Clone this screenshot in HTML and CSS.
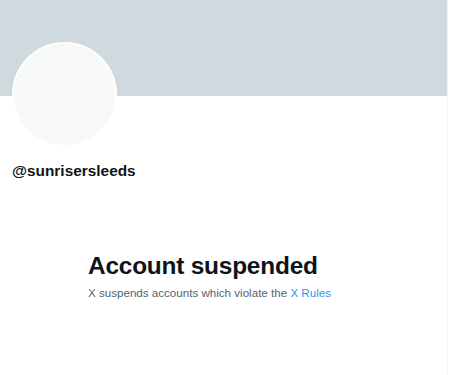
FILE: index.html
```html
<!DOCTYPE html>
<html>
<head>
<meta charset="utf-8">
<link rel="stylesheet" href="styles.css">
</head>
<body>
<main class="column">
  <div class="banner"></div>
  <div class="profile">
    <div class="avatar"></div>
    <div class="handle">@sunrisersleeds</div>
  </div>
  <section class="empty">
    <h1 class="empty-title">Account suspended</h1>
    <p class="empty-text">X suspends accounts which violate the <a class="link" href="#">X Rules</a></p>
  </section>
</main>
</body>
</html>
```
FILE: styles.css
```css
html, body {
  margin: 0;
  padding: 0;
  background: #ffffff;
}
body {
  font-family: "Liberation Sans", Arial, sans-serif;
  color: #0f1419;
  height: 375px;
  overflow: hidden;
}
.column {
  width: 447px;
  height: 375px;
  border-right: 1px solid #eff3f4;
}
.banner {
  height: 96px;
  background: #cfd9de;
}
.profile {
  padding: 0 12px;
}
.avatar {
  width: 101px;
  height: 101px;
  margin-top: -54px;
  border-radius: 50%;
  background: #f7f9f9;
  border: 2px solid #ffffff;
}
.handle {
  margin-top: 14px;
  font-size: 15.4px;
  font-weight: 700;
  line-height: 20px;
}
.empty {
  width: 272px;
  margin: 0 auto;
  padding: 70px 32px 0 33px;
}
.empty-title {
  margin: 0;
  font-size: 24.4px;
  font-weight: 700;
  line-height: 30px;
  letter-spacing: -0.2px;
}
.empty-text {
  margin: 4px 0 0;
  font-size: 11.6px;
  line-height: 16px;
  color: #536471;
}
.link {
  color: #1d9bf0;
  text-decoration: none;
}
```
